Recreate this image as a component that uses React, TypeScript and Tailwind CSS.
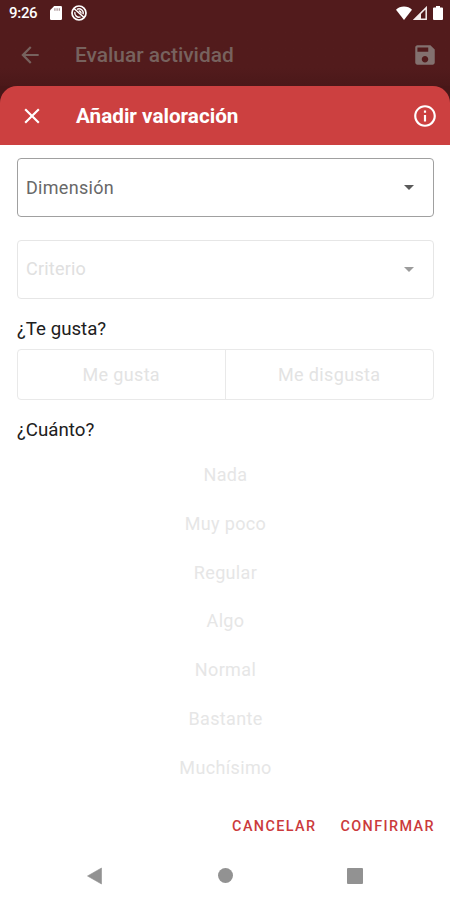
import React from "react";

const LEVELS = [
  "Nada",
  "Muy poco",
  "Regular",
  "Algo",
  "Normal",
  "Bastante",
  "Muchísimo",
];

function Icon({ d, className = "" }: { d: string; className?: string }) {
  return (
    <svg
      viewBox="0 0 24 24"
      fill="currentColor"
      className={`size-[26px] shrink-0 ${className}`}
    >
      <path d={d} />
    </svg>
  );
}

function StatusBar() {
  return (
    <div className="flex h-[26px] items-center pl-[9px] pr-[7px] text-white">
      <span className="w-[41px] text-[15px] font-medium leading-none tracking-[-0.3px]">
        9:26
      </span>
      <svg viewBox="0 0 12 14" className="h-[14px] w-3" fill="currentColor">
        <path d="M4.2 0H10.8Q12 0 12 1.2V12.8Q12 14 10.8 14H1.2Q0 14 0 12.8V4.2Z" />
        <path d="M4.3 2.2h1.2v2.6H4.3zM6.5 2.2h1.2v2.6H6.5zM8.7 2.2h1.2v2.6H8.7z" fill="#a58e90" />
      </svg>
      <svg
        viewBox="0 0 16 16"
        className="ml-[9px] size-4"
        fill="none"
        stroke="currentColor"
      >
        <circle cx="8" cy="8" r="7" strokeWidth="1.7" />
        <path d="M3 3.5L13 12.5" strokeWidth="1.6" />
        <path d="M6 4.3A4.2 4.2 0 0 1 12 9.3M3.9 7A4.2 4.2 0 0 0 9.5 11.9M7.7 6.1A2 2 0 0 1 10 8.5" strokeWidth="1.4" />
      </svg>
      <svg viewBox="0 0 16 14" className="ml-auto h-[14px] w-4" fill="currentColor">
        <path d="M8 14L0 3.8Q3.3 0.6 8 0.6T16 3.8Z" />
      </svg>
      <svg viewBox="0 0 14 14" className="ml-[1px] h-[14px] w-[14px]">
        <path d="M1.7 13.2H13.2V1.7Z" fill="none" stroke="#f4eeee" strokeWidth="1.5" />
        <path d="M1.7 13.2H8V7Z" fill="#f4eeee" />
      </svg>
      <svg viewBox="0 0 10 14" className="ml-[6px] h-[14px] w-[10px]" fill="currentColor">
        <path d="M3 0H7V1.5H9Q10 1.5 10 2.5V13Q10 14 9 14H1Q0 14 0 13V2.5Q0 1.5 1 1.5H3Z" />
      </svg>
    </div>
  );
}

function SelectField({ label, disabled }: { label: string; disabled?: boolean }) {
  return (
    <div
      className={`flex h-[59px] items-center justify-between rounded-[4px] border pl-2 pr-[19px] text-[18px] tracking-[0.3px] ${
        disabled ? "border-[#e6e6e6] text-[#e0e0e0]" : "border-[#a0a0a0] text-[#686868]"
      }`}
    >
      <span className={disabled ? "pb-[2px] tracking-[0.2px]" : ""}>{label}</span>
      <svg
        viewBox="0 0 10 5"
        className={`h-[5px] w-[10px] ${disabled ? "text-[#9c9c9c]" : "text-[#5a5a5a]"}`}
        fill="currentColor"
      >
        <path d="M0 0H10L5 5Z" />
      </svg>
    </div>
  );
}

function NavigationBar() {
  return (
    <div className="flex h-[49px] items-center justify-between px-[87px] text-[#929292]">
      <svg viewBox="0 0 16 18" className="h-[18px] w-4" fill="currentColor">
        <path d="M14.5 1V17L0.5 9Z" stroke="currentColor" strokeWidth="0.6" strokeLinejoin="round" />
      </svg>
      <div className="size-[15px] rounded-full bg-[#929292]" />
      <div className="size-4 rounded-[1px] bg-[#929292]" />
    </div>
  );
}

export default function App() {
  return (
    <div className="flex h-[900px] w-[450px] flex-col overflow-hidden bg-[#521b1c] font-['Roboto',sans-serif]">
      <StatusBar />
      <header className="flex h-[60px] items-center bg-linear-to-b from-[#521b1c] from-70% to-[#4b1819] pb-[2px] pl-[17px] pr-3 text-[#77625e]">
        <Icon d="M20 11H7.83l5.59-5.59L12 4l-8 8 8 8 1.41-1.41L7.83 13H20v-2z" />
        <h2 className="ml-8 text-[20.9px] font-medium leading-none">
          Evaluar actividad
        </h2>
        <Icon
          className="ml-auto text-[#83716f]"
          d="M17 3H5c-1.11 0-2 .9-2 2v14c0 1.1.89 2 2 2h14c1.1 0 2-.9 2-2V7l-4-4zm-5 16c-1.66 0-3-1.34-3-3s1.34-3 3-3 3 1.34 3 3-1.34 3-3 3zm3-10H5V5h10v4z"
        />
      </header>

      <div className="bg-[#481718]">
        <div className="flex h-[59px] items-center rounded-t-[17px] bg-[#cc4040] pl-[19px] pr-3 text-white">
          <Icon d="M19 6.41L17.59 5 12 10.59 6.41 5 5 6.41 10.59 12 5 17.59 6.41 19 12 13.41 17.59 19 19 17.59 13.41 12z" />
          <h1 className="ml-[31px] pt-px text-[20.7px] font-bold leading-none">
            Añadir valoración
          </h1>
          <Icon
            className="ml-auto"
            d="M11 7h2v2h-2zm0 4h2v6h-2zm1-9C6.48 2 2 6.48 2 12s4.48 10 10 10 10-4.48 10-10S17.52 2 12 2zm0 18c-4.41 0-8-3.59-8-8s3.59-8 8-8 8 3.59 8 8-3.59 8-8 8z"
          />
        </div>
      </div>

      <main className="flex flex-1 flex-col bg-white">
        <div className="pl-[17px] pr-4 pt-[13px]">
          <div className="flex flex-col gap-[23px]">
            <SelectField label="Dimensión" />
            <SelectField label="Criterio" disabled />
          </div>
          <p className="mt-[18px] text-[18.7px] leading-6 text-[#202020]">¿Te gusta?</p>
          <div className="mt-2 grid h-[51px] grid-cols-2 divide-x divide-[#e9e9e9] rounded-[4px] border border-[#e9e9e9] text-[18px] tracking-[0.35px] text-[#e3e3e3]">
            <div className="flex items-center justify-center">Me gusta</div>
            <div className="flex items-center justify-center">Me disgusta</div>
          </div>
          <p className="mt-[18px] text-[18.7px] leading-6 text-[#202020]">¿Cuánto?</p>
        </div>
        <ul className="mt-[9px] pl-px text-center text-[18px] tracking-[0.35px] text-[#e6e6e6]">
          {LEVELS.map((level) => (
            <li key={level} className="h-[48.75px] leading-[48.75px]">
              {level}
            </li>
          ))}
        </ul>
        <div className="mt-auto mb-[14px] flex justify-end gap-6 pr-[15px] text-[14.4px] font-medium leading-5 tracking-[1.4px] text-[#cb3a3c]">
          <span>CANCELAR</span>
          <span>CONFIRMAR</span>
        </div>
        <NavigationBar />
      </main>
    </div>
  );
}
